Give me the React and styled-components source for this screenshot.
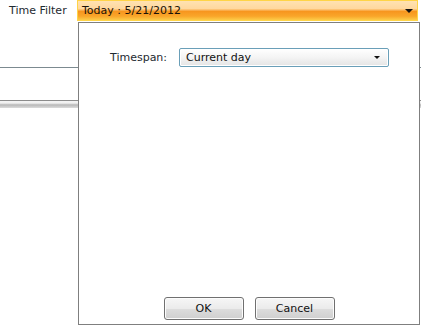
import React from 'react'
import styled, { createGlobalStyle } from 'styled-components'

const GlobalStyle = createGlobalStyle`
    body {
        margin: 0;
        background: #ffffff;
        font-family: "DejaVu Sans", Verdana, sans-serif;
        font-size: 11px;
        color: #1b1b1b;
    }
`

const Page = styled.div`
    position: relative;
    width: 421px;
    height: 328px;
    overflow: hidden;
`

const TopRow = styled.div`
    display: flex;
    height: 22px;
`

const FilterLabel = styled.div`
    width: 77px;
    padding-left: 9px;
    box-sizing: border-box;
    line-height: 22px;
    color: #1e2a30;
`

const ComboWrap = styled.div`
    position: relative;
    width: 341px;
`

const ComboBar = styled.div`
    display: flex;
    align-items: center;
    justify-content: space-between;
    height: 21px;
    box-sizing: border-box;
    padding: 0 4px 0 4px;
    border: 1px solid #ffd447;
    background: linear-gradient(#ffe2b2 0%, #ffd89e 40%, #f7961f 55%, #f9a62a 80%, #fdcc48 100%);
    color: #1a1208;
`

const Arrow = styled.span`
    width: 0;
    height: 0;
    border-left: ${p => p.size}px solid transparent;
    border-right: ${p => p.size}px solid transparent;
    border-top: ${p => p.size}px solid #111;
`

const Popup = styled.div`
    position: absolute;
    top: 22px;
    left: 1px;
    width: 342px;
    height: 303px;
    box-sizing: border-box;
    border: 1px solid #7f7f7f;
    background: #ffffff;
    display: flex;
    flex-direction: column;
    justify-content: space-between;
    z-index: 2;
`

const FieldRow = styled.div`
    display: flex;
    align-items: center;
    margin-top: 25px;
    padding-left: 31px;
    gap: 12px;
`

const FieldLabel = styled.span`
    color: #1e2a30;
`

const Select = styled.div`
    display: flex;
    align-items: center;
    justify-content: space-between;
    width: 210px;
    height: 19px;
    box-sizing: border-box;
    padding: 0 8px 0 6px;
    border: 1px solid #6a9fb8;
    border-radius: 2px;
    background: linear-gradient(#ffffff 0%, #f4f4f4 50%, #e4e4e4 100%);
    box-shadow: inset 0 0 0 1px #ffffff;
    color: #111;
`

const ButtonRow = styled.div`
    display: flex;
    justify-content: center;
    gap: 11px;
    margin-bottom: 4px;
`

const Button = styled.button`
    width: 80px;
    height: 23px;
    border: 1px solid #707070;
    border-radius: 3px;
    background: linear-gradient(#f6f6f6 0%, #ebebeb 50%, #dddddd 51%, #cfcfcf 100%);
    box-shadow: inset 0 0 0 1px #fcfcfc;
    font-family: "DejaVu Sans", Verdana, sans-serif;
    font-size: 11px;
    color: #111;
    padding: 0;
`

const Content = styled.div`
    padding-top: 45px;
`

const Rule = styled.div`
    height: 1px;
    background: #7c8a90;
`

const GridTop = styled.div`
    margin-top: 32px;
    height: 7px;
    border-top: 1px solid #8c8c8c;
    background: linear-gradient(#f4f4f4 0%, #f0f0f0 30%, #b8b8b8 55%, #dcdcdc 100%);
`

export default function App() {
    return (
        <Page>
            <GlobalStyle />
            <TopRow>
                <FilterLabel>Time Filter</FilterLabel>
                <ComboWrap>
                    <ComboBar>
                        <span>Today : 5/21/2012</span>
                        <Arrow size={4} />
                    </ComboBar>
                    <Popup>
                        <FieldRow>
                            <FieldLabel>Timespan:</FieldLabel>
                            <Select>
                                <span>Current day</span>
                                <Arrow size={3} />
                            </Select>
                        </FieldRow>
                        <ButtonRow>
                            <Button>OK</Button>
                            <Button>Cancel</Button>
                        </ButtonRow>
                    </Popup>
                </ComboWrap>
            </TopRow>
            <Content>
                <Rule />
                <GridTop />
            </Content>
        </Page>
    )
}
